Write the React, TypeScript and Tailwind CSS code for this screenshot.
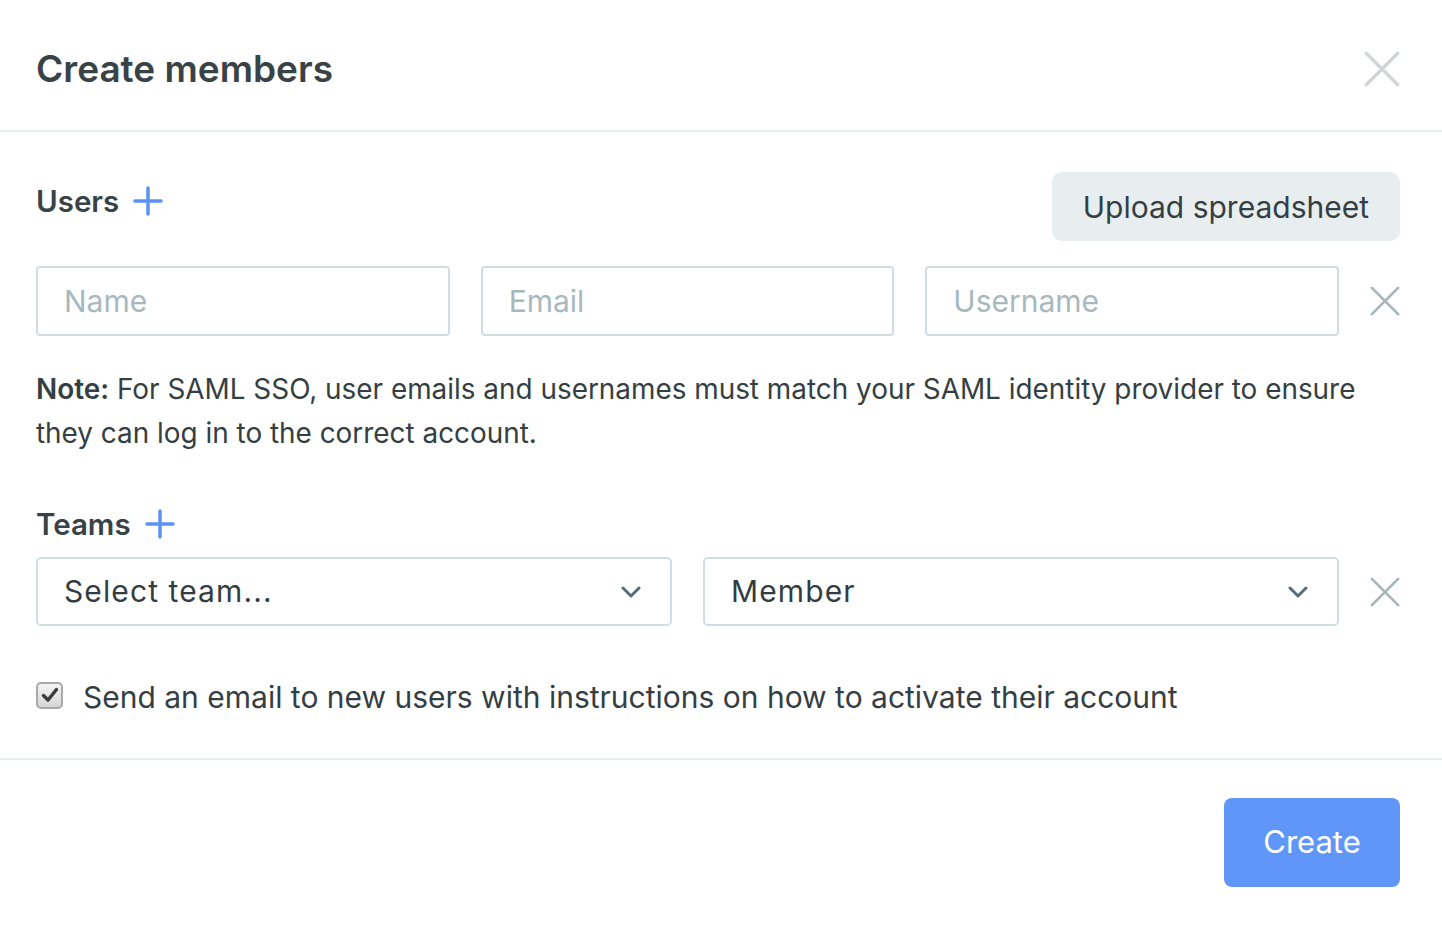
import React from "react";

const font = { fontFamily: "Inter, 'Open Sans', sans-serif" };

function XIcon({ size = 32, color = "#a9b6bb" }: { size?: number; color?: string }) {
  return (
    <svg width={size} height={size} viewBox="0 0 32 32" fill="none">
      <path d="M2 2L30 30M30 2L2 30" stroke={color} strokeWidth="3" strokeLinecap="round" />
    </svg>
  );
}

function Plus() {
  return (
    <svg width="30" height="30" viewBox="0 0 30 30" fill="none">
      <path d="M15 2V28M2 15H28" stroke="#5b93f5" strokeWidth="3.5" strokeLinecap="round" />
    </svg>
  );
}

function Chevron() {
  return (
    <svg width="20" height="12" viewBox="0 0 20 12" fill="none">
      <path d="M2 2L10 10L18 2" stroke="#546e7a" strokeWidth="3" strokeLinecap="round" strokeLinejoin="round" />
    </svg>
  );
}

function Field({ placeholder }: { placeholder: string }) {
  return (
    <div className="flex-1 h-[70px] border-2 border-[#d3dde1] rounded-[4px] flex items-center px-[26px]">
      <span className="text-[30px] text-[#a7b8be]">{placeholder}</span>
    </div>
  );
}

function Select({ label }: { label: string }) {
  return (
    <div className="flex-1 h-[69px] border-2 border-[#d3dde1] rounded-[5px] flex items-center justify-between pl-[26px] pr-[29px]">
      <span className="text-[30px] text-[#333d41] tracking-[1.1px]">{label}</span>
      <Chevron />
    </div>
  );
}

export default function App() {
  return (
    <div className="w-[1442px] h-[928px] bg-white text-[#353f43]" style={font}>
      <div className="h-[132px] border-b-2 border-[#e8eef0] flex items-center justify-between pl-[36px] pr-[42px] pt-[8px]">
        <h1 className="text-[37px] font-semibold text-[#394245]">Create members</h1>
        <XIcon size={36} color="#d2d5d6" />
      </div>

      <div className="pl-[36px] pr-[42px] pt-[40px] pb-[41px] border-b-2 border-[#e8eef0]">
        <div className="flex items-start justify-between">
          <div className="flex items-center gap-[14px] mt-[9px] h-[40px]">
            <span className="text-[29.5px] font-semibold text-[#394245]">Users</span>
            <Plus />
          </div>
          <button className="h-[69px] px-[31px] rounded-[10px] bg-[#e8eef0] text-[30px] text-[#353f43] pt-[2px]">
            Upload spreadsheet
          </button>
        </div>

        <div className="flex items-center gap-[31px] mt-[25px]">
          <Field placeholder="Name" />
          <Field placeholder="Email" />
          <Field placeholder="Username" />
          <div className="w-[30px] shrink-0 flex justify-end">
            <XIcon size={32} />
          </div>
        </div>

        <p className="mt-[31px] max-w-[1330px] text-[27.9px] leading-[44px] text-[#353f43]">
          <b className="font-semibold">Note:</b> For SAML SSO, user emails and usernames must match your SAML identity provider to ensure they can log in to the correct account.
        </p>

        <div className="flex items-center gap-[14px] mt-[49px] h-[40px]">
          <span className="text-[29.5px] font-semibold text-[#394245]">Teams</span>
          <Plus />
        </div>

        <div className="flex items-center gap-[31px] mt-[13px]">
          <Select label="Select team..." />
          <Select label="Member" />
          <div className="w-[30px] shrink-0 flex justify-end">
            <XIcon size={32} />
          </div>
        </div>

        <div className="flex items-center gap-[20px] mt-[51px] h-[40px]">
          <div className="w-[27px] h-[27px] -mt-[4px] rounded-[5px] border-2 border-[#a9a9a9] bg-gradient-to-b from-[#f4f4f4] to-[#d6d6d6] flex items-center justify-center">
            <svg width="18" height="16" viewBox="0 0 18 16" fill="none">
              <path d="M2.5 8.5L7 13L15.5 2.5" stroke="#3b3b3b" strokeWidth="3.4" strokeLinecap="round" strokeLinejoin="round" />
            </svg>
          </div>
          <span className="text-[30px] text-[#353f43]">
            Send an email to new users with instructions on how to activate their account
          </span>
        </div>
      </div>

      <div className="flex justify-end pl-[36px] pr-[42px] pt-[38px]">
        <button className="w-[176px] h-[89px] rounded-[8px] bg-[#6096f7] text-white text-[31px]">
          Create
        </button>
      </div>
    </div>
  );
}
